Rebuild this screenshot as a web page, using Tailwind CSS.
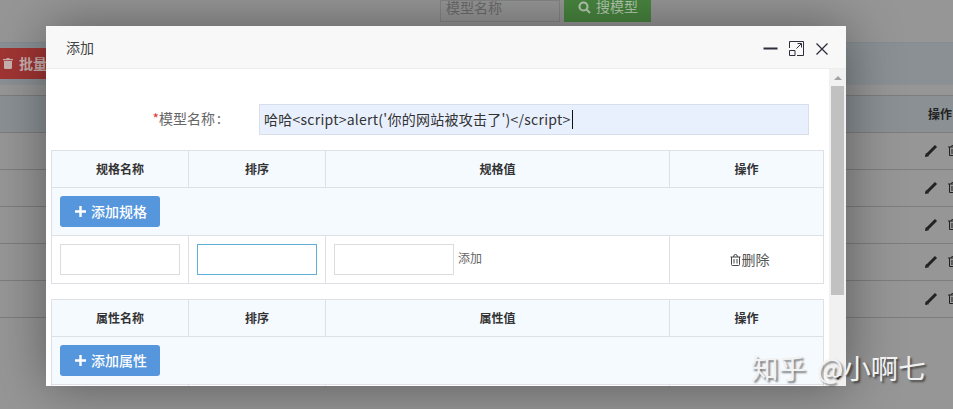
<!DOCTYPE html>
<html lang="zh">
<head>
<meta charset="utf-8">
<script src="https://cdn.jsdelivr.net/npm/@tailwindcss/browser@4"></script>
</head>
<body class="w-[953px] h-[409px] overflow-hidden bg-[#969696] font-['Microsoft_YaHei','Noto_Sans_CJK_SC',sans-serif] text-[12px] text-[#333]">
<div class="relative w-[953px] h-[409px] overflow-hidden">
  <!-- dimmed page -->
  <div class="h-[22px] flex justify-start pl-[440px] gap-[4px]">
    <div class="w-[120px] h-[22px] border border-[#858585] text-[#6b6b6b] text-[14px] leading-[12px] pl-[5px]">模型名称</div>
    <div class="w-[87px] h-[22px] bg-[#48853f] text-[#b4c9b0] text-[14px] leading-[13px] flex gap-[5px] justify-center pl-[1px]">
      <svg class="w-[13px] h-[13px] mt-[1px]" viewBox="0 0 13 13" fill="none" stroke="#b4c9b0" stroke-width="2.2"><circle cx="5.500" cy="5.500" r="4"/><path d="M8.500 8.500l3.500 3.500"/></svg>
      <span>搜模型</span>
    </div>
  </div>
  <div class="mt-[20px] h-[43px] bg-[#8a9094] border-t border-[#858b8f] flex items-start pt-[5px]">
    <div class="w-[60px] h-[31px] bg-[#a03533] text-[#c9b1b0] text-[14px] font-bold flex items-center gap-[6px] pl-[3px] whitespace-nowrap overflow-hidden">
      <svg class="w-[10px] h-[11px] shrink-0" viewBox="0 0 10 11" fill="#c9b1b0"><path d="M3.500 0h3v1H10v1.200H0V1h3.500zM1 3h8v6.700q0 1.300-1.300 1.300H2.300Q1 11 1 9.700z"/></svg>
      <span>批量删除</span>
    </div>
  </div>
  <div class="mt-[10px] border-t border-[#7d7d7d]">
    <div class="h-[37px] bg-[#8a9094] border-b border-[#7d7d7d] flex items-center justify-end pr-[1px] text-[12px] font-bold text-[#222]">操作</div>
    <div class="h-[37px] border-b border-[#7d7d7d] flex items-center pl-[925px] gap-[10px] pb-[2px] overflow-hidden"><svg class="w-[13px] h-[13px] shrink-0" viewBox="0 0 13 13" fill="none" stroke="#222"><path d="M0.500 12.500l0.700-3 2.300 2.300z" fill="#222"/><path d="M2.500 10.500L11 2" stroke-width="3"/></svg><svg class="w-[10px] h-[11px] shrink-0" viewBox="0 0 10 11" fill="none" stroke="#222"><path d="M0 2h10M3 2Q3 .5 5 .5T7 2M1.500 2v8.500h7V2M4 4v5M6 4v5"/></svg></div>
    <div class="h-[37px] border-b border-[#7d7d7d] flex items-center pl-[925px] gap-[10px] pb-[2px] overflow-hidden"><svg class="w-[13px] h-[13px] shrink-0" viewBox="0 0 13 13" fill="none" stroke="#222"><path d="M0.500 12.500l0.700-3 2.300 2.300z" fill="#222"/><path d="M2.500 10.500L11 2" stroke-width="3"/></svg><svg class="w-[10px] h-[11px] shrink-0" viewBox="0 0 10 11" fill="none" stroke="#222"><path d="M0 2h10M3 2Q3 .5 5 .5T7 2M1.500 2v8.500h7V2M4 4v5M6 4v5"/></svg></div>
    <div class="h-[37px] border-b border-[#7d7d7d] flex items-center pl-[925px] gap-[10px] pb-[2px] overflow-hidden"><svg class="w-[13px] h-[13px] shrink-0" viewBox="0 0 13 13" fill="none" stroke="#222"><path d="M0.500 12.500l0.700-3 2.300 2.300z" fill="#222"/><path d="M2.500 10.500L11 2" stroke-width="3"/></svg><svg class="w-[10px] h-[11px] shrink-0" viewBox="0 0 10 11" fill="none" stroke="#222"><path d="M0 2h10M3 2Q3 .5 5 .5T7 2M1.500 2v8.500h7V2M4 4v5M6 4v5"/></svg></div>
    <div class="h-[37px] border-b border-[#7d7d7d] flex items-center pl-[925px] gap-[10px] pb-[2px] overflow-hidden"><svg class="w-[13px] h-[13px] shrink-0" viewBox="0 0 13 13" fill="none" stroke="#222"><path d="M0.500 12.500l0.700-3 2.300 2.300z" fill="#222"/><path d="M2.500 10.500L11 2" stroke-width="3"/></svg><svg class="w-[10px] h-[11px] shrink-0" viewBox="0 0 10 11" fill="none" stroke="#222"><path d="M0 2h10M3 2Q3 .5 5 .5T7 2M1.500 2v8.500h7V2M4 4v5M6 4v5"/></svg></div>
    <div class="h-[37px] border-b border-[#7d7d7d] flex items-center pl-[925px] gap-[10px] pb-[2px] overflow-hidden"><svg class="w-[13px] h-[13px] shrink-0" viewBox="0 0 13 13" fill="none" stroke="#222"><path d="M0.500 12.500l0.700-3 2.300 2.300z" fill="#222"/><path d="M2.500 10.500L11 2" stroke-width="3"/></svg><svg class="w-[10px] h-[11px] shrink-0" viewBox="0 0 10 11" fill="none" stroke="#222"><path d="M0 2h10M3 2Q3 .5 5 .5T7 2M1.500 2v8.500h7V2M4 4v5M6 4v5"/></svg></div>
  </div>

  <!-- modal -->
  <div class="absolute left-[46px] top-[26px] w-[800px] h-[360px] bg-white shadow-[1px_1px_50px_rgba(0,0,0,0.4)] flex flex-col overflow-hidden">
    <div class="h-[43px] shrink-0 bg-[#f8f8f8] border-b border-[#eeeeee] flex items-center pl-[20px] pr-[17px] text-[#333]">
      <span class="flex-1 text-[14px] text-[#444] leading-none mb-[1px]">添加</span>
      <svg class="w-[15px] h-[15px] mt-[3px]" viewBox="0 0 15 15" fill="none" stroke="#2e2d3c"><path d="M0.500 7.500h14" stroke-width="2"/></svg>
      <svg class="w-[15px] h-[15px] ml-[11px] mt-[3px]" viewBox="0 0 15 15" fill="none" stroke="#2e2d3c"><path d="M0.500 7V.5h14v14H8M6 14.500H.5V9.500H6zM7.500 7.500L12 3M8.500 2.500h4v4" stroke-width="1"/></svg>
      <svg class="w-[14px] h-[14px] ml-[11px] mt-[3px]" viewBox="0 0 14 14" fill="none" stroke="#2e2d3c" stroke-width="1.300"><path d="M1.500 1.500l11 11M12.500 1.500l-11 11"/></svg>
    </div>
    <div class="flex-1 flex min-h-0">
      <div class="flex-1 min-w-0 pl-[5px] overflow-hidden">
        <div class="h-[35px] mt-[33px] flex items-center">
          <div class="w-[170px] text-right text-[14px] text-[#666] leading-none mb-[3px]"><span class="text-[#e33]">*</span>模型名称<span class="ml-[2px]">:</span></div>
          <div class="ml-[38px] w-[550px] h-[31px] bg-[#e8f0fe] border border-[#d9dfe8] pl-[4px] flex items-center text-[14px] text-[#333] whitespace-nowrap tracking-[0.25px]">哈哈&lt;script&gt;alert('你的网站被攻击了')&lt;/script&gt;<span class="w-[1px] h-[19px] bg-[#111] ml-[1px]"></span></div>
        </div>

        <table class="mt-[13px] w-[772px] table-fixed border-collapse border border-[#dde1e6] text-[12px]">
          <colgroup><col class="w-[137px]"><col class="w-[137px]"><col class="w-[344px]"><col class="w-[154px]"></colgroup>
          <tr class="h-[37px] bg-[#f5faff] text-[#333]">
            <th class="border border-[#dde1e6] font-bold">规格名称</th><th class="border border-[#dde1e6] font-bold">排序</th><th class="border border-[#dde1e6] font-bold">规格值</th><th class="border border-[#dde1e6] font-bold">操作</th>
          </tr>
          <tr class="h-[48px] bg-[#f5faff]"><td colspan="4" class="border border-[#dde1e6] pl-[8px]">
            <div class="w-[100px] h-[31px] rounded-[3px] bg-[#5596dc] text-white text-[14px] font-medium flex items-center justify-center gap-[5px] pl-[2px]"><svg class="w-[11px] h-[11px]" viewBox="0 0 11 11" fill="white"><path d="M4.300 0h2.400v4.300H11v2.400H6.700V11H4.300V6.700H0V4.300h4.300z"/></svg>添加规格</div>
          </td></tr>
          <tr class="h-[48px] bg-white">
            <td class="border border-[#dde1e6] pl-[8px]"><div class="w-[120px] h-[31px] border border-[#dcdcdc]"></div></td>
            <td class="border border-[#dde1e6] pl-[8px]"><div class="w-[120px] h-[31px] border border-[#5eb0d8]"></div></td>
            <td class="border border-[#dde1e6] pl-[8px]"><div class="flex items-center gap-[4px] text-[#666] text-[12px]"><div class="w-[120px] h-[31px] border border-[#dcdcdc]"></div><span class="mb-[3px]">添加</span></div></td>
            <td class="border border-[#dde1e6]"><div class="flex items-center justify-center text-[#555] text-[14px] gap-[1px] pl-[6px]"><svg class="w-[11px] h-[12px]" viewBox="0 0 11 12" fill="none" stroke="#444"><path d="M.5 3h10M3.500 3Q3.500 .5 5.500 .5T7.500 3M1.500 3v7.500q0 1 1 1h6q1 0 1-1V3M4 5v4.500M7 5v4.500"/></svg>删除</div></td>
          </tr>
        </table>

        <table class="mt-[15px] w-[772px] table-fixed border-collapse border border-[#dde1e6] text-[12px]">
          <colgroup><col class="w-[137px]"><col class="w-[137px]"><col class="w-[344px]"><col class="w-[154px]"></colgroup>
          <tr class="h-[37px] bg-[#f5faff]">
            <th class="border border-[#dde1e6] font-bold">属性名称</th><th class="border border-[#dde1e6] font-bold">排序</th><th class="border border-[#dde1e6] font-bold">属性值</th><th class="border border-[#dde1e6] font-bold">操作</th>
          </tr>
          <tr class="h-[48px] bg-[#f5faff]"><td colspan="4" class="border border-[#dde1e6] pl-[8px]">
            <div class="w-[100px] h-[31px] rounded-[3px] bg-[#5596dc] text-white text-[14px] font-medium flex items-center justify-center gap-[5px] pl-[2px]"><svg class="w-[11px] h-[11px]" viewBox="0 0 11 11" fill="white"><path d="M4.300 0h2.400v4.300H11v2.400H6.700V11H4.300V6.700H0V4.300h4.300z"/></svg>添加属性</div>
          </td></tr>
          <tr class="h-[48px] bg-white"><td class="border border-[#dde1e6]"></td><td class="border border-[#dde1e6]"></td><td class="border border-[#dde1e6]"></td><td class="border border-[#dde1e6]"></td></tr>
        </table>
      </div>
      <!-- scrollbar -->
      <div class="w-[17px] shrink-0 bg-[#f1f1f1] flex flex-col items-center">
        <div class="h-[17px] flex items-center justify-center"><div class="w-0 h-0 border-x-[4px] border-x-transparent border-b-[4px] border-b-[#a3a3a3]"></div></div>
        <div class="w-[13px] h-[209px] bg-[#c1c1c1]"></div>
        <div class="mt-auto h-[17px] flex items-center justify-center"><div class="w-0 h-0 border-x-[4px] border-x-transparent border-t-[4px] border-t-[#505050]"></div></div>
      </div>
    </div>
  </div>

  <!-- watermark -->
  <div class="absolute left-[751px] top-[349px] text-[27.5px] leading-[36px] text-[#f2f2f2] whitespace-nowrap [word-spacing:5px] [text-shadow:2px_2px_2px_rgba(0,0,0,0.5)]">知乎 @小啊七</div>
</div>
</body>
</html>
